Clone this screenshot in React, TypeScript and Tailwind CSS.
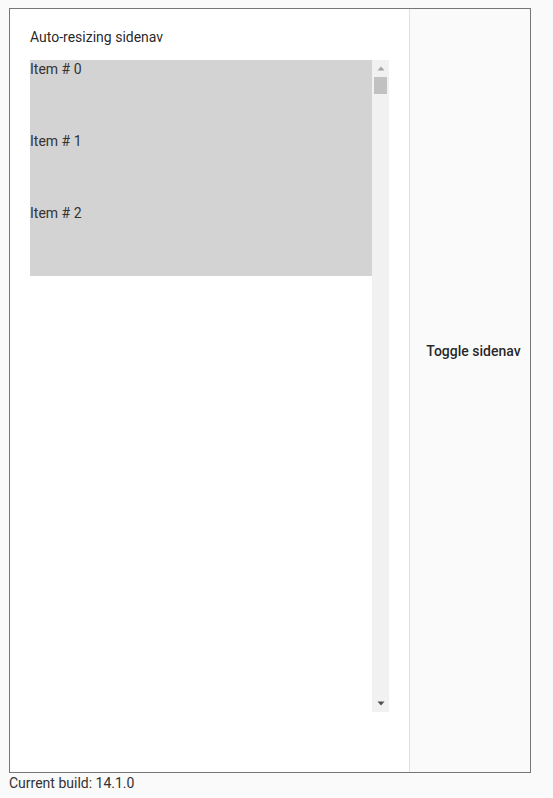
import React from "react";

export default function App() {
  const items = ["Item # 0", "Item # 1", "Item # 2"];
  return (
    <div
      className="min-h-[798px] w-full bg-[#fafafa] pt-[8px] pl-[9px] text-[14px] text-[rgba(0,0,0,0.87)]"
      style={{ fontFamily: "Roboto, 'Liberation Sans', sans-serif" }}
    >
      <div className="flex h-[765px] w-[522px] border border-[#767676]">
        <div className="flex w-[400px] shrink-0 flex-col border-r border-[#e0e0e0] bg-white pl-[20px] pt-[18px]">
          <div className="mb-[13px] h-[20px] leading-[20px]">Auto-resizing sidenav</div>
          <div className="flex h-[652px] w-[359px]">
            <div className="flex w-[342px] flex-col">
              {items.map((it) => (
                <div key={it} className="h-[72px] bg-[#d3d3d3] pt-[1px] leading-[16px] text-[#333]">
                  {it}
                </div>
              ))}
            </div>
            <div className="flex w-[17px] flex-col bg-[#f1f1f1]">
              <div className="flex h-[17px] items-center justify-center">
                <svg width="8" height="5" viewBox="0 0 8 5">
                  <polygon points="4,0.5 7.5,4.5 0.5,4.5" fill="#a3a3a3" />
                </svg>
              </div>
              <div className="mx-[2px] h-[17px] bg-[#c1c1c1]" />
              <div className="flex-1" />
              <div className="flex h-[17px] items-center justify-center">
                <svg width="8" height="5" viewBox="0 0 8 5">
                  <polygon points="0.5,0.5 7.5,0.5 4,4.5" fill="#505050" />
                </svg>
              </div>
            </div>
          </div>
        </div>
        <div className="flex flex-1 justify-center bg-[#fafafa] pl-[7px] pt-[324px]">
          <div className="h-[36px] px-[0px] font-medium leading-[36px]">Toggle sidenav</div>
        </div>
      </div>
      <div className="h-[20px] leading-[20px] text-[#333]">Current build: 14.1.0</div>
    </div>
  );
}
